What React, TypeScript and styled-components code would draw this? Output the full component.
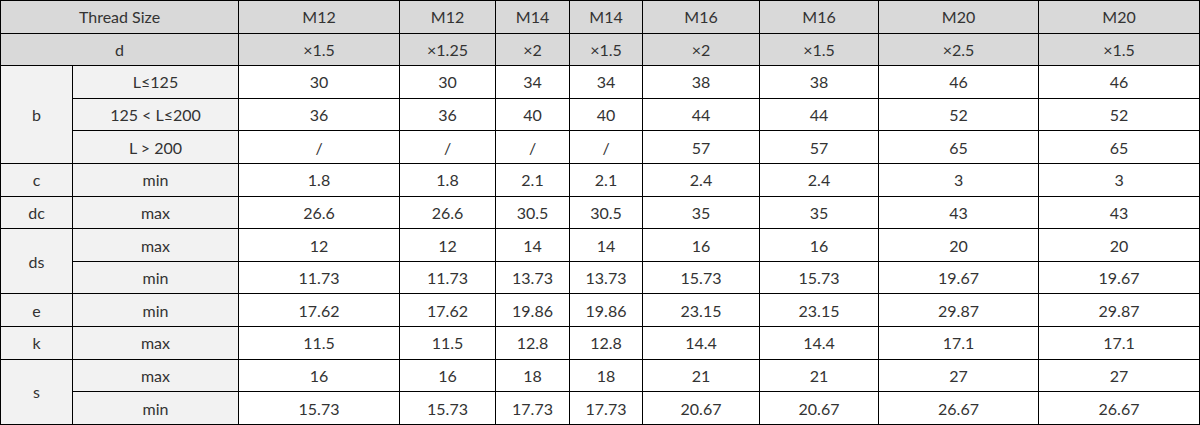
import React from "react";
import styled, { createGlobalStyle } from "styled-components";

const GlobalStyle = createGlobalStyle`
  body {
    margin: 0;
    background: #fff;
    font-family: Lato, "Open Sans", sans-serif;
  }
`;

const widths = [72, 166, 161, 96, 74, 73, 117, 119, 160, 161];

const sizes = ["M12", "M12", "M14", "M14", "M16", "M16", "M20", "M20"];
const pitches = ["×1.5", "×1.25", "×2", "×1.5", "×2", "×1.5", "×2.5", "×1.5"];

type Row = { group?: string; span?: number; label: string; values: string[] };

const rows: Row[] = [
  { group: "b", span: 3, label: "L\u2264125", values: ["30", "30", "34", "34", "38", "38", "46", "46"] },
  { label: "125 < L\u2264200", values: ["36", "36", "40", "40", "44", "44", "52", "52"] },
  { label: "L > 200", values: ["/", "/", "/", "/", "57", "57", "65", "65"] },
  { group: "c", span: 1, label: "min", values: ["1.8", "1.8", "2.1", "2.1", "2.4", "2.4", "3", "3"] },
  { group: "dc", span: 1, label: "max", values: ["26.6", "26.6", "30.5", "30.5", "35", "35", "43", "43"] },
  { group: "ds", span: 2, label: "max", values: ["12", "12", "14", "14", "16", "16", "20", "20"] },
  { label: "min", values: ["11.73", "11.73", "13.73", "13.73", "15.73", "15.73", "19.67", "19.67"] },
  { group: "e", span: 1, label: "min", values: ["17.62", "17.62", "19.86", "19.86", "23.15", "23.15", "29.87", "29.87"] },
  { group: "k", span: 1, label: "max", values: ["11.5", "11.5", "12.8", "12.8", "14.4", "14.4", "17.1", "17.1"] },
  { group: "s", span: 2, label: "max", values: ["16", "16", "18", "18", "21", "21", "27", "27"] },
  { label: "min", values: ["15.73", "15.73", "17.73", "17.73", "20.67", "20.67", "26.67", "26.67"] },
];

const Table = styled.table`
  width: 1200px;
  height: 425px;
  border-collapse: collapse;
  table-layout: fixed;
  color: #333;
  font-size: 16px;
`;

const Tr = styled.tr`
  height: 32.6px;
`;

const Cell = styled.td<{ $tone?: "head" | "label" }>`
  border: 1px solid #000;
  padding: 0;
  text-align: center;
  vertical-align: middle;
  font-weight: 400;
  background: ${(p) => (p.$tone === "head" ? "#d9d9d9" : p.$tone === "label" ? "#f2f2f2" : "#fff")};
`;

export default function App() {
  return (
    <>
      <GlobalStyle />
      <Table>
        <colgroup>
          {widths.map((w, i) => (
            <col key={i} style={{ width: w }} />
          ))}
        </colgroup>
        <thead>
          <Tr>
            <Cell as="th" $tone="head" colSpan={2}>Thread Size</Cell>
            {sizes.map((s, i) => (
              <Cell as="th" $tone="head" key={i}>{s}</Cell>
            ))}
          </Tr>
          <Tr>
            <Cell as="th" $tone="head" colSpan={2}>d</Cell>
            {pitches.map((s, i) => (
              <Cell as="th" $tone="head" key={i}>{s}</Cell>
            ))}
          </Tr>
        </thead>
        <tbody>
          {rows.map((r, i) => (
            <Tr key={i}>
              {r.group && (
                <Cell $tone="label" rowSpan={r.span}>{r.group}</Cell>
              )}
              <Cell $tone="label">{r.label}</Cell>
              {r.values.map((v, j) => (
                <Cell key={j}>{v}</Cell>
              ))}
            </Tr>
          ))}
        </tbody>
      </Table>
    </>
  );
}
